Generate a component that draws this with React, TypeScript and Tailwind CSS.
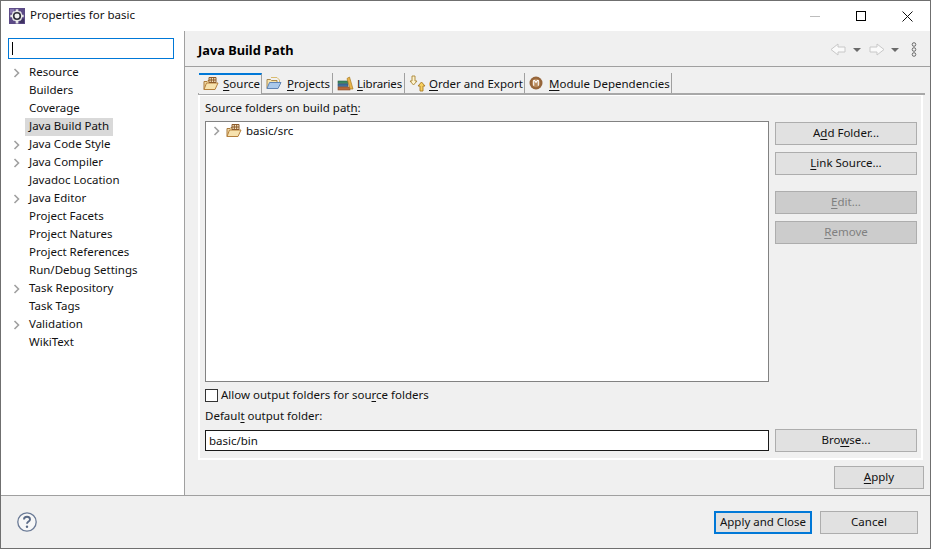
import type { ReactNode } from "react"

const treeItems = [
  { label: "Resource", arrow: true },
  { label: "Builders" },
  { label: "Coverage" },
  { label: "Java Build Path", selected: true },
  { label: "Java Code Style", arrow: true },
  { label: "Java Compiler", arrow: true },
  { label: "Javadoc Location" },
  { label: "Java Editor", arrow: true },
  { label: "Project Facets" },
  { label: "Project Natures" },
  { label: "Project References" },
  { label: "Run/Debug Settings" },
  { label: "Task Repository", arrow: true },
  { label: "Task Tags" },
  { label: "Validation", arrow: true },
  { label: "WikiText" },
]

function Chevron() {
  return (
    <svg width="8" height="10" viewBox="0 0 8 10" fill="none">
      <path d="M1.500 1l4 4-4 4" stroke="#a0a0a0" strokeWidth="1.600" />
    </svg>
  )
}

function PackageFolder() {
  return (
    <svg width="16" height="14" viewBox="0 0 16 14" fill="none" className="shrink-0">
      <path d="M1 12.500V4.500h3l1-1h4v2" fill="#f3dca6" stroke="#a9793a" />
      <path d="M1 12.500l2.500-6.500h11.500l-3 6.500z" fill="#f7e2ae" stroke="#b5803c" strokeLinejoin="round" />
      <path d="M6 .5h7v5H6zM8.300.5v5M10.700.5v5M6 3h7" stroke="#8c5a2b" strokeWidth="1" fill="#f5e6c4" />
    </svg>
  )
}

function ProjectsFolder() {
  return (
    <svg width="16" height="14" viewBox="0 0 16 14" fill="none" className="shrink-0">
      <path d="M1 12.500V3.500h3.500l1 1h5.500v2" fill="#f6e4ae" stroke="#a9884a" />
      <path d="M5 1.500h6l2.500 2.500v2" stroke="#d9bc70" />
      <path d="M1 12.500l2.500-6h11.500l-3 6z" fill="#a9c8ea" stroke="#5f84b5" strokeLinejoin="round" />
    </svg>
  )
}

function LibrariesIcon() {
  return (
    <svg width="17" height="15" viewBox="0 0 17 15" fill="none" className="shrink-0">
      <rect x="1" y="5" width="10" height="2.500" fill="#3a8a62" stroke="#2d5a48" strokeWidth=".6" />
      <rect x="1" y="8" width="10" height="2.500" fill="#3f6f9e" stroke="#2d4f78" strokeWidth=".6" />
      <rect x="1" y="11" width="12" height="3" fill="#b5683a" stroke="#8a4a26" strokeWidth=".6" />
      <path d="M10 2.500l2.500-1.500 3.500 12h-3z" fill="#e9b54a" stroke="#a87a24" strokeWidth=".7" />
    </svg>
  )
}

function OrderIcon() {
  return (
    <svg width="17" height="17" viewBox="0 0 17 17" fill="none" className="shrink-0">
      <path d="M3 1h3v5h2L4.500 10 1 6h2z" fill="#fdf3cf" stroke="#a88432" strokeWidth=".9" />
      <path d="M11 16h3v-5h2l-3.500-4L9 11h2z" fill="#f7cf5e" stroke="#a87a24" strokeWidth=".9" />
    </svg>
  )
}

function ModuleIcon() {
  return (
    <svg width="14" height="14" viewBox="0 0 14 14" className="shrink-0">
      <circle cx="7" cy="7" r="6.500" fill="#96653a" />
      <circle cx="7" cy="7" r="4.200" fill="#b98a5c" />
      <path d="M4.700 9.700V4.500h1l1.300 2 1.300-2h1v5.200" fill="none" stroke="#fff" strokeWidth="1.100" />
    </svg>
  )
}

function EclipseIcon() {
  return (
    <svg width="16" height="16" viewBox="0 0 18 18" className="mr-[5px] shrink-0">
      <rect x="0" y="0" width="18" height="18" fill="#5b4a86" />
      <rect x="1" y="1" width="5" height="5" fill="#8a78b0" />
      <rect x="12" y="12" width="5" height="5" fill="#3f3362" />
      <path d="M7.500 1.500h3v16h-3zM1.500 7.500h15v3h-15zM3.500 5.500l2-2 9 9-2 2zM12.500 3.500l2 2-9 9-2-2z" fill="#e8e8e8" />
      <circle cx="9" cy="9" r="6" fill="#e8e8e8" />
      <circle cx="9" cy="9" r="4.600" fill="#2e2e3a" />
      <circle cx="9" cy="9" r="2.800" fill="#f2f2f2" />
    </svg>
  )
}

function TabItem({ icon, children, className = "" }: { icon: ReactNode; children: ReactNode; className?: string }) {
  return (
    <div className={`flex h-[20px] items-center border-r border-[#a0a0a0] pl-[4px] ${className}`}>
      {icon}
      <span className="pt-[1px]">{children}</span>
    </div>
  )
}

function PushButton({ children, disabled, className = "" }: { children: ReactNode; disabled?: boolean; className?: string }) {
  return (
    <div
      className={`flex h-[23px] items-center justify-center border border-[#adadad] pb-[1px] ${
        disabled ? "bg-[#cccccc] text-[#808080]" : "bg-[#e1e1e1] text-[#111]"
      } ${className}`}
    >
      {children}
    </div>
  )
}

export default function App() {
  return (
    <div
      className="flex h-[549px] w-[931px] flex-col overflow-hidden border border-[#6f6f6f] bg-white text-[11.5px] leading-[18px] text-[#111]"
      style={{ fontFamily: '"Noto Sans", "Noto Sans CJK KR", sans-serif' }}
    >
      {/* title bar */}
      <div className="flex h-[30px] shrink-0 items-center pl-[8px]">
        <EclipseIcon />
        <span className="pb-[2px]">Properties for basic</span>
        <div className="ml-auto flex items-center">
          <div className="flex h-[30px] w-[46px] items-center justify-center">
            <div className="h-px w-[10px] bg-[#bdbdbd]" />
          </div>
          <div className="flex h-[30px] w-[46px] items-center justify-center">
            <div className="h-[10px] w-[10px] border border-black" />
          </div>
          <div className="flex h-[30px] w-[46px] items-center justify-center">
            <svg width="11" height="11" viewBox="0 0 11 11">
              <path d="M.5.5l10 10M10.500.5l-10 10" stroke="#111" strokeWidth="1" />
            </svg>
          </div>
        </div>
      </div>

      {/* body */}
      <div className="flex min-h-0 flex-1">
        {/* left tree */}
        <div className="w-[184px] shrink-0 border-r border-[#a0a0a0] pt-[7px] pl-[7px]">
          <div className="flex h-[21px] w-[166px] items-center border border-[#0078d7] pl-[3px]">
            <div className="h-[13px] w-px bg-black" />
          </div>
          <div className="mt-[5px]">
            {treeItems.map((item) => (
              <div key={item.label} className="flex h-[18px] items-center">
                <div className="flex w-[17px] shrink-0 items-center justify-center pl-[4px] pr-[3px]">
                  {item.arrow && <Chevron />}
                </div>
                <span className={`h-[18px] px-[4px] leading-[16px] ${item.selected ? "bg-[#d9d9d9]" : ""}`}>{item.label}</span>
              </div>
            ))}
          </div>
        </div>

        {/* right page */}
        <div className="flex min-w-0 flex-1 flex-col bg-[#f0f0f0]">
          <div className="flex h-[36px] shrink-0 items-center justify-between border-b border-[#a0a0a0] pl-[13px] pr-[13px] pt-[2px]">
            <span className="pt-[1px] text-[12.800px] font-bold text-black">Java Build Path</span>
            <div className="flex items-center">
              <svg width="16" height="13" viewBox="0 0 16 13" fill="none">
                <path d="M15 4H8V1L1 6.500 8 12V9h7z" stroke="#c8c8c8" fill="#fafafa" />
              </svg>
              <svg width="8" height="4" viewBox="0 0 8 4" className="ml-[7px]">
                <path d="M0 0h8L4 4z" fill="#6a6a6a" />
              </svg>
              <svg width="16" height="13" viewBox="0 0 16 13" fill="none" className="ml-[8px]">
                <path d="M1 4h7V1l7 5.500L8 12V9H1z" stroke="#c8c8c8" fill="#fafafa" />
              </svg>
              <svg width="8" height="4" viewBox="0 0 8 4" className="ml-[6px]">
                <path d="M0 0h8L4 4z" fill="#6a6a6a" />
              </svg>
              <svg width="6" height="15" viewBox="0 0 6 15" fill="none" className="ml-[12px]">
                <circle cx="3" cy="2.500" r="1.800" stroke="#6a6a6a" />
                <circle cx="3" cy="7.500" r="1.800" stroke="#6a6a6a" />
                <circle cx="3" cy="12.500" r="1.800" stroke="#6a6a6a" />
              </svg>
            </div>
          </div>

          <div className="ml-[13px] mr-[5px] mt-[6px] flex-1">
            <div className="flex h-[22px] items-end border-b-[2px] border-[#a8a8a8] pl-px">
              <div className="relative z-10 -mb-[1px] flex h-[21px] w-[63px] items-center gap-[4px] border-t-[2px] border-r border-[#0078d7] border-r-[#a0a0a0] bg-[#f0f0f0] pb-[1px] pl-[4px]">
                <PackageFolder />
                <span><u className="underline-offset-2">S</u>ource</span>
              </div>
              <TabItem icon={<ProjectsFolder />} className="w-[71px] gap-[5px]">
                <u className="underline-offset-2">P</u>rojects
              </TabItem>
              <TabItem icon={<LibrariesIcon />} className="w-[72px] gap-[3px] tracking-[-0.2px]">
                <u className="underline-offset-2">L</u>ibraries
              </TabItem>
              <TabItem icon={<OrderIcon />} className="w-[120px] gap-[3px]">
                <u className="underline-offset-2">O</u>rder and Export
              </TabItem>
              <TabItem icon={<ModuleIcon />} className="w-[147px] gap-[6px]">
                <u className="underline-offset-2">M</u>odule Dependencies
              </TabItem>
            </div>

            <div className="mr-[2px] h-[365px] border-[2px] border-t-[1px] border-white pl-[5px]">
              <div className="mt-[3px] h-[18px]">
                Source folders on build pat<u className="underline-offset-2">h</u>:
              </div>
              <div className="mt-[4px] flex gap-[6px]">
                <div className="h-[261px] w-[564px] border border-[#828282] bg-white">
                  <div className="flex h-[15px] items-center pl-[7px] pt-[2px]">
                    <Chevron />
                    <span className="ml-[5px]"><PackageFolder /></span>
                    <span className="ml-[4px]">basic/src</span>
                  </div>
                </div>
                <div className="flex w-[142px] flex-col pt-[1px]">
                  <PushButton>
                    <span>A<u className="underline-offset-2">d</u>d Folder...</span>
                  </PushButton>
                  <PushButton className="mt-[7px]">
                    <span><u className="underline-offset-2">L</u>ink Source...</span>
                  </PushButton>
                  <PushButton disabled className="mt-[16px]">
                    <span><u className="underline-offset-2">E</u>dit...</span>
                  </PushButton>
                  <PushButton disabled className="mt-[7px]">
                    <span><u className="underline-offset-2">R</u>emove</span>
                  </PushButton>
                </div>
              </div>
              <div className="mt-[6px] flex h-[14px] items-center">
                <div className="h-[13px] w-[13px] border border-[#333] bg-white" />
                <span className="ml-[3px]">
                  Allow output folders for sou<u className="underline-offset-2">r</u>ce folders
                </span>
              </div>
              <div className="mt-[5px] h-[18px]">
                Defaul<u className="underline-offset-2">t</u> output folder:
              </div>
              <div className="mt-[4px] flex items-center gap-[6px]">
                <div className="flex h-[21px] w-[564px] items-center border border-[#1a1a1a] bg-white pl-[3px]">
                  basic/bin
                </div>
                <PushButton className="w-[142px]">
                  <span>Bro<u className="underline-offset-2">w</u>se...</span>
                </PushButton>
              </div>
            </div>
            <div className="mr-[1px] mt-[6px] flex justify-end">
              <PushButton className="w-[90px]">
                <span><u className="underline-offset-2">A</u>pply</span>
              </PushButton>
            </div>
          </div>
        </div>
      </div>

      {/* footer */}
      <div className="flex h-[53px] shrink-0 items-center border-t border-[#a0a0a0] bg-[#f0f0f0] pl-[16px] pr-[12px]">
        <svg width="20" height="20" viewBox="0 0 20 20" fill="none">
          <circle cx="10" cy="10" r="9.200" stroke="#6a7a96" strokeWidth="1.300" fill="#f7f7f7" />
          <path d="M7 7.500C7 5.500 8.500 4.800 10 4.800c1.700 0 3 1 3 2.600 0 2.200-3 2.200-3 4.400" stroke="#5a6a86" strokeWidth="1.900" />
          <circle cx="10" cy="14.700" r="1.200" fill="#5a6a86" />
        </svg>
        <div className="ml-auto flex gap-[8px]">
          <div className="flex h-[23px] w-[98px] items-center justify-center border-[2px] border-[#0078d7] bg-[#e1e1e1]">
            Apply and Close
          </div>
          <PushButton className="w-[98px]">Cancel</PushButton>
        </div>
      </div>
    </div>
  )
}
